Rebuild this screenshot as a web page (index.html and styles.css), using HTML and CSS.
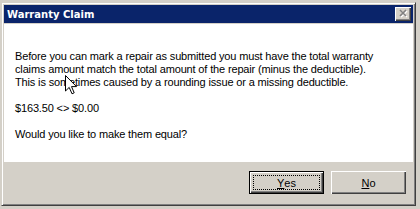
FILE: index.html
```html
<!DOCTYPE html>
<html>
<head>
<meta charset="utf-8">
<link rel="stylesheet" href="styles.css">
</head>
<body>
<div class="dialog">
  <div class="titlebar">
    <span class="title">Warranty Claim</span>
    <span class="close">
      <svg width="10" height="9" viewBox="0 0 10 9">
        <path d="M2 2 L8 8 M8 2 L2 8" stroke="#fff" stroke-width="1.6" fill="none"/>
        <path d="M1 1 L7 7 M7 1 L1 7" stroke="#808080" stroke-width="1.6" fill="none"/>
      </svg>
    </span>
  </div>
  <div class="sep"></div>
  <div class="message">
    <p class="text">Before you can mark a repair as submitted you must have the total warranty<br>claims amount match the total amount of the repair (minus the deductible).<br>This is sometimes caused by a rounding issue or a missing deductible.<br><br>$163.50 &lt;&gt; $0.00<br><br>Would you like to make them equal?</p>
    <svg class="cursor" width="13" height="20" viewBox="0 0 13 20">
      <path d="M0.5 0.5 L0.5 16 L4.2 12.4 L7 18.8 L9.2 17.8 L6.5 11.6 L11.5 11.6 Z" fill="#fff" stroke="#000" stroke-width="1" stroke-linejoin="miter"/>
    </svg>
  </div>
  <div class="buttons">
    <button class="btn default"><span class="focus"><u>Y</u>es</span></button>
    <button class="btn"><span class="label"><u>N</u>o</span></button>
  </div>
</div>
</body>
</html>
```
FILE: styles.css
```css
html, body {
  margin: 0;
  padding: 0;
}
body {
  width: 420px;
  height: 209px;
  overflow: hidden;
  background: #d4d0c8;
  padding: 2px 0 0 1px;
  box-sizing: border-box;
}
.dialog {
  width: 415px;
  height: 204px;
  box-sizing: border-box;
  border: 1px solid;
  border-color: #d4d0c8 #404040 #404040 #d4d0c8;
  box-shadow: inset 1px 1px #fff, inset -1px -1px #808080;
  padding: 2px;
  background: #d4d0c8;
  display: flex;
  flex-direction: column;
  font-family: "Liberation Sans", Arial, sans-serif;
  font-size: 11px;
}
.titlebar {
  height: 18px;
  background: #0a246a;
  display: flex;
  align-items: center;
  justify-content: space-between;
  padding-left: 3px;
}
.title {
  color: #fff;
  font-family: "DejaVu Sans", Verdana, sans-serif;
  font-weight: bold;
  font-size: 10px;
}
.close {
  width: 16px;
  height: 14px;
  box-sizing: border-box;
  margin-right: 2px;
  background: #d4d0c8;
  box-shadow: inset 1px 1px #fff, inset -1px -1px #404040, inset -2px -2px #808080;
  display: flex;
  align-items: center;
  justify-content: center;
  padding: 0 0 1px 1px;
}
.close svg {
  display: block;
}
.sep {
  height: 1px;
  background: #d4d0c8;
}
.message {
  height: 138px;
  background: #fff;
  position: relative;
  padding: 26px 0 0 11px;
  box-sizing: border-box;
}
.text {
  margin: 0;
  line-height: 13px;
  color: #000;
  white-space: nowrap;
  letter-spacing: -0.15px;
}
.cursor {
  position: absolute;
  left: 61px;
  top: 51px;
}
.buttons {
  flex: 1;
  display: flex;
  justify-content: flex-end;
  align-items: flex-start;
  gap: 7px;
  padding: 9px 7px 0 0;
  background: #d4d0c8;
}
.btn {
  width: 75px;
  height: 23px;
  box-sizing: border-box;
  margin: 0;
  padding: 0;
  border: none;
  background: #d4d0c8;
  box-shadow: inset 1px 1px #fff, inset -1px -1px #404040, inset -2px -2px #808080;
  font-family: "Liberation Sans", Arial, sans-serif;
  font-size: 11px;
  color: #000;
  display: flex;
  align-items: stretch;
  justify-content: center;
}
.btn.default {
  border: 1px solid #000;
  padding: 3px;
}
.focus {
  flex: 1;
  border: 1px dotted #000;
  display: flex;
  align-items: center;
  justify-content: center;
}
.label {
  flex: 1;
  display: flex;
  align-items: center;
  justify-content: center;
}
```
